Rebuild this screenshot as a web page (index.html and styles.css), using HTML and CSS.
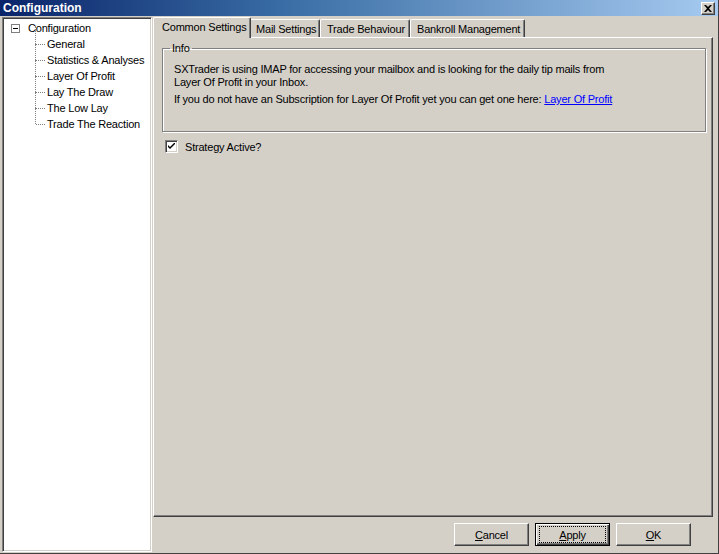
FILE: index.html
```html
<!DOCTYPE html>
<html>
<head>
<meta charset="utf-8">
<link rel="stylesheet" href="styles.css">
</head>
<body>
<div class="window">
  <div class="titlebar">
    <span class="title">Configuration</span>
    <span class="close"><svg width="8" height="7" viewBox="0 0 8 7"><path d="M0 0h2l2 2 2-2h2L5 3.5 8 7H6L4 5 2 7H0l3-3.5z" fill="#000"/></svg></span>
  </div>
  <div class="main">
    <div class="tree">
      <div class="root">
        <span class="expander"><span class="minus"></span></span>
        <span class="label">Configuration</span>
      </div>
      <ul class="children">
        <li>General</li>
        <li>Statistics &amp; Analyses</li>
        <li>Layer Of Profit</li>
        <li>Lay The Draw</li>
        <li>The Low Lay</li>
        <li class="last">Trade The Reaction</li>
      </ul>
    </div>
    <div class="right">
      <div class="tabs">
        <div class="tab active w1">Common Settings</div>
        <div class="tab w2">Mail Settings</div>
        <div class="tab w3">Trade Behaviour</div>
        <div class="tab w4">Bankroll Management</div>
      </div>
      <div class="panel">
        <fieldset class="group">
          <legend>Info</legend>
          <p class="line1">SXTrader is using IMAP for accessing your mailbox and is looking for the daily tip mails from<br>Layer Of Profit in your Inbox.</p>
          <p class="line2">If you do not have an Subscription for Layer Of Profit yet you can get one here: <a href="#">Layer Of Profit</a></p>
        </fieldset>
        <label class="check">
          <span class="box"><svg width="7" height="7" viewBox="0 0 7 7"><path d="M0 2l2 2 5-5v2l-5 5-2-2z" fill="#000"/></svg></span>
          <span>Strategy Active?</span>
        </label>
      </div>
      <div class="buttons">
        <button class="btn"><u>C</u>ancel</button>
        <button class="btn default"><span class="focus"><u>A</u>pply</span></button>
        <button class="btn"><u>O</u>K</button>
      </div>
    </div>
  </div>
</div>
</body>
</html>
```
FILE: styles.css
```css
* { box-sizing: border-box; }
html, body { margin: 0; padding: 0; }
body {
  width: 719px;
  height: 554px;
  overflow: hidden;
  font-family: "Liberation Sans", Arial, sans-serif;
  font-size: 11px;
  letter-spacing: -0.2px;
  color: #000;
  background: #D4D0C8;
}
.window {
  width: 719px;
  height: 554px;
  background: #D4D0C8;
  display: flex;
  flex-direction: column;
  border-right: 1px solid #404040;
  border-bottom: 1px solid #404040;
}
.titlebar {
  height: 16px;
  flex: none;
  background: linear-gradient(to right, #0A246A 0%, #3A6EA5 40%, #A6CAF0 100%);
  display: flex;
  align-items: center;
  justify-content: space-between;
  padding: 0 2px 0 3px;
}
.title {
  color: #fff;
  font-weight: bold;
  font-size: 12px;
  font-family: "Liberation Sans", Arial, sans-serif;
  letter-spacing: 0;
  line-height: 16px;
}
.close {
  width: 14px;
  height: 13px;
  margin-right: 1px;
  margin-top: 1px;
  background: #D4D0C8;
  border-top: 1px solid #fff;
  border-left: 1px solid #fff;
  border-right: 1px solid #404040;
  border-bottom: 1px solid #404040;
  box-shadow: inset -1px -1px 0 #808080;
  display: flex;
  align-items: center;
  justify-content: center;
}
.close svg { display: block; margin: -1px 0 0 -1px; }
.main {
  flex: 1;
  display: flex;
  padding: 1px 1px 1px 2px;
  gap: 1px;
}
.tree {
  width: 150px;
  flex: none;
  background: #fff;
  border-top: 1px solid #808080;
  border-left: 1px solid #808080;
  border-right: 1px solid #fff;
  border-bottom: 1px solid #fff;
  box-shadow: inset 1px 1px 0 #404040, inset -1px -1px 0 #D4D0C8;
  padding: 2px 0 0 0;
  white-space: nowrap;
}
.root {
  display: flex;
  align-items: center;
  height: 16px;
  padding-left: 7px;
}
.expander {
  width: 9px;
  height: 9px;
  border: 1px solid #808080;
  background: #fff;
  position: relative;
  margin-left: 1px;
}
.minus {
  position: absolute;
  left: 1px;
  top: 3px;
  width: 5px;
  height: 1px;
  background: #000;
}
.root .label { margin-left: 8px; line-height: 16px; }
.children {
  list-style: none;
  margin: 0;
  padding: 0 0 0 32px;
  position: relative;
}
.children li {
  position: relative;
  height: 16px;
  line-height: 16px;
  padding-left: 12px;
}
.children li::before {
  content: "";
  position: absolute;
  left: 0;
  top: -8px;
  height: 16px;
  border-left: 1px dotted #808080;
}
.children li:first-child::before { top: -10px; height: 18px; }
.children li::after {
  content: "";
  position: absolute;
  left: 1px;
  top: 8px;
  width: 9px;
  border-top: 1px dotted #808080;
}
.right {
  flex: 1;
  display: flex;
  flex-direction: column;
}
.tabs {
  display: flex;
  align-items: flex-end;
  height: 20px;
  padding-left: 2px;
  position: relative;
  z-index: 1;
}
.tab {
  height: 18px;
  line-height: 18px;
  padding-left: 6px;
  background: #D4D0C8;
  border-top: 1px solid #fff;
  border-left: 1px solid #fff;
  border-right: 1px solid #404040;
  box-shadow: inset -1px 0 0 #808080;
  border-radius: 2px 2px 0 0;
  white-space: nowrap;
}
.tab.active {
  height: 21px;
  margin-bottom: -1px;
  margin-left: -2px;
  margin-right: -2px;
  padding-left: 8px;
  line-height: 18px;
  position: relative;
  z-index: 2;
}
.w1 { width: 98px; }
.w2 { width: 71px; }
.w3 { width: 90px; }
.w4 { width: 115px; }
.panel {
  height: 480px;
  flex: none;
  width: 560px;
  border-top: 1px solid #fff;
  border-left: 1px solid #fff;
  border-right: 1px solid #404040;
  border-bottom: 1px solid #404040;
  box-shadow: inset -1px -1px 0 #808080;
  padding: 4px 6px 0 8px;
}
.group {
  margin: 0;
  height: 90px;
  border: 1px solid #808080;
  box-shadow: 1px 1px 0 #fff, inset 1px 1px 0 #fff;
  padding: 0 0 0 11px;
  position: relative;
}
.group legend {
  padding: 0 2px;
  margin-left: -4px;
  line-height: 12px;
}
.group p { margin: 0; line-height: 13px; }
.group .line1 { margin-top: 9px; }
.group .line2 { margin-top: 4px; }
.group a { color: #0000FF; text-decoration: underline; }
.check {
  display: flex;
  align-items: center;
  margin-top: 8px;
  margin-left: 3px;
  height: 13px;
}
.box {
  width: 13px;
  height: 13px;
  background: #fff;
  border-top: 1px solid #808080;
  border-left: 1px solid #808080;
  border-right: 1px solid #fff;
  border-bottom: 1px solid #fff;
  box-shadow: inset 1px 1px 0 #404040, inset -1px -1px 0 #D4D0C8;
  display: flex;
  align-items: center;
  justify-content: center;
  margin-right: 7px;
}
.box svg { display: block; }
.buttons {
  display: flex;
  justify-content: flex-end;
  gap: 6px;
  padding: 6px 26px 0 0;
}
.btn {
  width: 75px;
  height: 23px;
  font-family: "Liberation Sans", Arial, sans-serif;
  font-size: 11px;
  letter-spacing: -0.2px;
  color: #000;
  background: #D4D0C8;
  border-top: 1px solid #fff;
  border-left: 1px solid #fff;
  border-right: 1px solid #404040;
  border-bottom: 1px solid #404040;
  box-shadow: inset -1px -1px 0 #808080;
  padding: 0;
  display: flex;
  align-items: center;
  justify-content: center;
}
.btn.default {
  border: 1px solid #000;
  box-shadow: inset 1px 1px 0 #fff, inset -1px -1px 0 #404040, inset -2px -2px 0 #808080;
}
.focus {
  display: flex;
  align-items: center;
  justify-content: center;
  width: 65px;
  height: 15px;
  outline: 1px dotted #000;
}
```
